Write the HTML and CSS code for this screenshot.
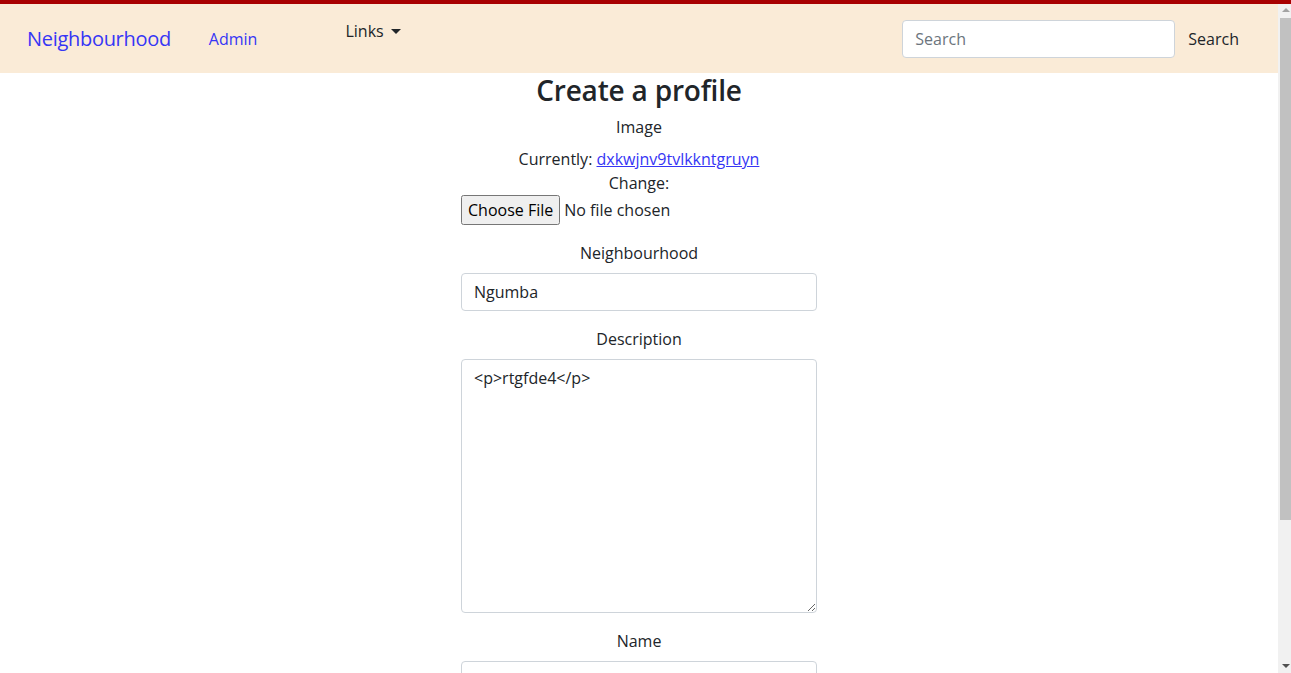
FILE: index.html
```html
<!DOCTYPE html>
<html lang="en">
<head>
<meta charset="utf-8">
<title>Create a profile</title>
<link rel="stylesheet" href="styles.css">
</head>
<body>
<div class="topline"></div>
<div class="frame">
  <div class="viewport">
    <nav class="navbar">
      <a class="brand" href="#">Neighbourhood</a>
      <a class="nav-link" href="#">Admin</a>
      <a class="nav-link dropdown" href="#">Links <span class="caret"></span></a>
      <form class="search">
        <input class="search-input" type="search" placeholder="Search">
        <button class="search-btn" type="button">Search</button>
      </form>
    </nav>
    <main class="container">
      <h3 class="title">Create a profile</h3>
      <form class="profile-form">
        <div class="group">
          <label class="label">Image</label>
          <div class="current">Currently: <a href="#">dxkwjnv9tvlkkntgruyn</a></div>
          <div class="change">Change:</div>
          <input class="file" type="file">
        </div>
        <div class="group">
          <label class="label">Neighbourhood</label>
          <input class="control" type="text" value="Ngumba">
        </div>
        <div class="group">
          <label class="label">Description</label>
          <textarea class="control area" rows="10">&lt;p&gt;rtgfde4&lt;/p&gt;</textarea>
        </div>
        <div class="group">
          <label class="label">Name</label>
          <input class="control" type="text" value="">
        </div>
      </form>
    </main>
  </div>
  <div class="scrollbar">
    <span class="arrow up"></span>
    <div class="thumb"></div>
    <span class="arrow down"></span>
  </div>
</div>
</body>
</html>
```
FILE: styles.css
```css
* { box-sizing: border-box; }
html, body { margin: 0; padding: 0; height: 100%; overflow: hidden; }
body {
  font-family: "Open Sans", "Noto Sans", sans-serif;
  font-size: 16px;
  line-height: 24px;
  color: #212529;
  background: #fff;
  display: flex;
  flex-direction: column;
}
.topline { height: 4px; background: #a80000; flex: none; }
.frame { flex: 1; display: flex; min-height: 0; }
.viewport { flex: 1; overflow: hidden; }
.navbar {
  height: 69px;
  background: #faebd7;
  display: flex;
  align-items: center;
  padding: 0 27px 0 27px;
}
.brand { font-size: 20px; color: #3636f5; text-decoration: none; line-height: 30px; letter-spacing: -0.3px; }
.nav-link { color: #3636f5; text-decoration: none; font-size: 16px; }
.brand + .nav-link { margin-left: 38px; }
.dropdown { color: #212529; margin-left: 88px; align-self: flex-start; margin-top: 15px; display: flex; align-items: center; }
.caret {
  display: inline-block; margin-left: 7px; width: 0; height: 0;
  border-left: 5px solid transparent; border-right: 5px solid transparent; border-top: 5px solid #212529;
}
.search { margin-left: auto; display: flex; align-items: center; }
.search-input {
  width: 273px; height: 38px; border: 1px solid #ced4da; border-radius: 4px;
  padding: 6px 12px; font: inherit; color: #495057; background: #fff;
}
.search-input::placeholder { color: #6c757d; }
.search-btn { border: 0; background: transparent; font: inherit; color: #212529; padding: 6px 12px; margin-left: 1px; }
.container { width: 356px; margin: 0 auto; text-align: center; }
.title { font-size: 28px; font-weight: 600; line-height: 34px; margin: 0 0 8px; letter-spacing: -0.2px; }
.group { margin-bottom: 16px; }
.label { display: block; margin-bottom: 8px; }
.current a { color: #3636f5; }
.file { display: block; width: 100%; font: inherit; color: #212529; }
.file::file-selector-button { font: inherit; padding: 2px 5px; margin-right: 4px; }
.control {
  display: block; width: 100%; height: 38px; border: 1px solid #ced4da; border-radius: 4px;
  padding: 6px 12px; font: inherit; color: #212529; text-align: left; background: #fff;
}
.area { height: 254px; resize: vertical; }
.scrollbar { width: 13px; background: #f1f1f1; position: relative; flex: none; }
.thumb { position: absolute; left: 2px; right: 0; top: 14px; height: 502px; background: #c1c1c1; }
.arrow { position: absolute; left: 4px; width: 0; height: 0; border-left: 4px solid transparent; border-right: 4px solid transparent; }
.arrow.up { top: 4px; border-bottom: 4px solid #a3a3a3; }
.arrow.down { bottom: 5px; border-top: 4px solid #505050; }
```
